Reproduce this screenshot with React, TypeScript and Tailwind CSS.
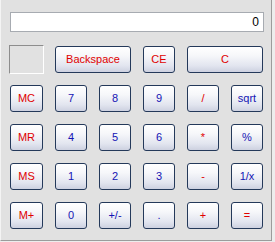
import React from "react";

const btn =
  "h-[27px] rounded-[3px] border border-[#24395a] bg-[linear-gradient(180deg,#ffffff_0%,#f6f7fa_35%,#e2e5ef_75%,#cdd1e0_100%)] flex items-center justify-center text-[11px] leading-none";
const red = "text-[#e00000]";
const blue = "text-[#1414b4]";

type B = { label: string; c: string; span?: boolean };

const grid: B[] = [
  { label: "Backspace", c: red, span: true },
  { label: "CE", c: red },
  { label: "C", c: red, span: true },
  { label: "7", c: blue },
  { label: "8", c: blue },
  { label: "9", c: blue },
  { label: "/", c: red },
  { label: "sqrt", c: blue },
  { label: "4", c: blue },
  { label: "5", c: blue },
  { label: "6", c: blue },
  { label: "*", c: red },
  { label: "%", c: blue },
  { label: "1", c: blue },
  { label: "2", c: blue },
  { label: "3", c: blue },
  { label: "-", c: red },
  { label: "1/x", c: blue },
  { label: "0", c: blue },
  { label: "+/-", c: blue },
  { label: ".", c: blue },
  { label: "+", c: red },
  { label: "=", c: red },
];

export default function App() {
  return (
    <div
      className="w-[275px] h-[242px] bg-[#ededed]"
      style={{ fontFamily: '"Liberation Sans", Arial, sans-serif' }}
    >
      <div className="w-[272px] h-[241px] bg-[#e1e1e1] border-r border-b border-[#9c9c9c] border-l border-l-[#f4f4f4]">
        <div className="pt-[12px] pl-[9px]">
          <div className="w-[254px] h-[20px] bg-white border border-[#a7abb1] flex items-center justify-end pr-[4px] text-[12px] text-black">
            0
          </div>
        </div>
        <div className="flex mt-[13px] pl-[8px]">
          <div className="flex flex-col w-[35px]">
            <div className="w-[35px] h-[29px] border-t border-l border-[#8d8d8d] border-b border-r border-b-white border-r-white" />
            <div className="flex flex-col gap-[12px] mt-[11px] ml-[1px]">
              {["MC", "MR", "MS", "M+"].map((m) => (
                <div key={m} className={`${btn} ${red} w-[33px]`}>
                  {m}
                </div>
              ))}
            </div>
          </div>
          <div className="ml-[11px] pt-[1px] grid grid-cols-[repeat(5,32px)] auto-rows-[27px] gap-x-[12px] gap-y-[12px]">
            {grid.map((b, i) => (
              <div key={i} className={`${btn} ${b.c} ${b.span ? "col-span-2" : ""}`}>
                {b.label}
              </div>
            ))}
          </div>
        </div>
      </div>
    </div>
  );
}
